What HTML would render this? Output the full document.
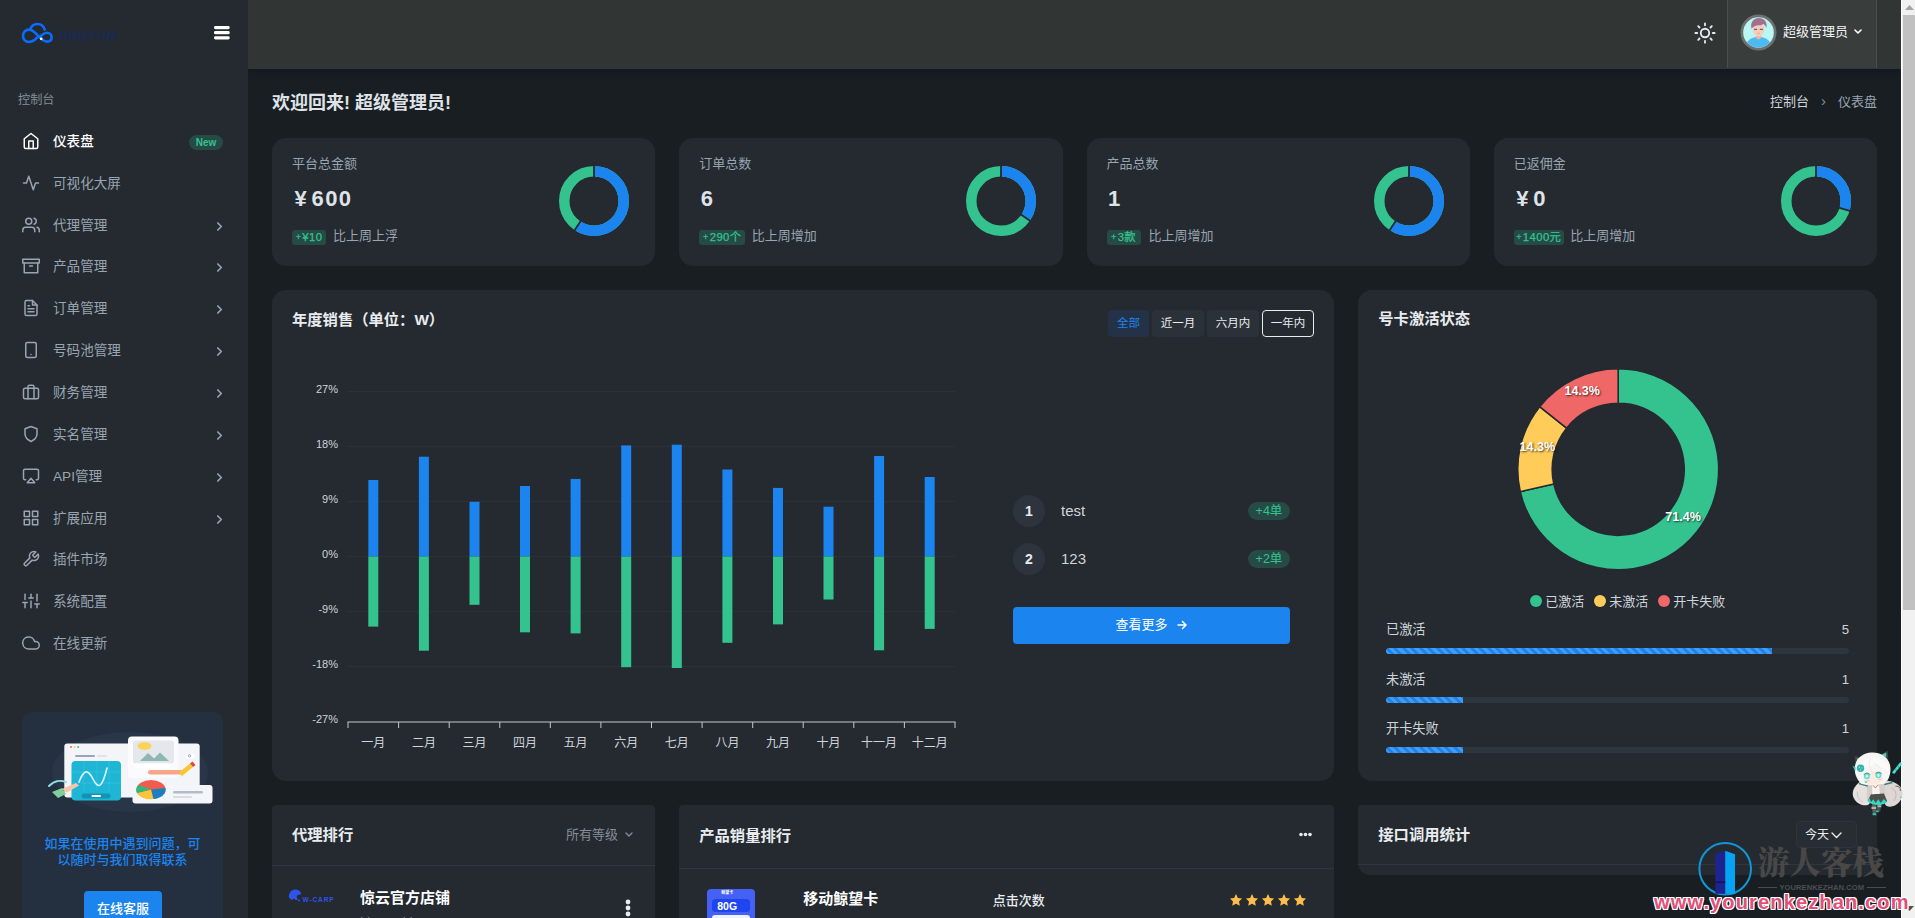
<!DOCTYPE html>
<html lang="zh-CN">
<head>
<meta charset="utf-8">
<title>仪表盘</title>
<style>
*{box-sizing:border-box;margin:0;padding:0}
html,body{width:1915px;height:918px;overflow:hidden;background:#191e22;}
body{font-family:"Liberation Sans","Noto Sans CJK SC",sans-serif;font-size:13.6px;color:#ced4da;position:relative;}
svg{display:block}
.abs{position:absolute}
/* sidebar */
#sidebar{position:absolute;left:0;top:0;width:248px;height:918px;background:#242a30;z-index:5}
#topbar{position:absolute;left:248px;top:0;width:1653px;height:69px;background:#313533;box-shadow:0 3px 6px rgba(10,20,35,.55);z-index:4}
#scroll{position:absolute;left:1901px;top:0;width:14px;height:918px;background:#f1f1f1;border-left:1px solid #fff;z-index:20}
#scroll .thumb{position:absolute;left:1px;top:15px;width:12px;height:594.5px;background:#c1c1c1}
.logo-txt{position:absolute;left:57px;top:28px;font-size:12px;font-weight:bold;letter-spacing:.85px;color:#1b2b50;line-height:16px;-webkit-text-stroke:.4px #1b2b50}
.menu-title{position:absolute;left:18px;top:91px;font-size:12.2px;color:#858d98;line-height:18px}
.mi{position:absolute;left:0;width:248px;height:42px;color:#99a4b1;font-size:13.6px}
.mi svg.ic{position:absolute;left:22px;top:12px;width:18px;height:18px;fill:none;stroke:currentColor;stroke-width:2;stroke-linecap:round;stroke-linejoin:round}
.mi span.t{position:absolute;left:53px;top:11px;line-height:22px;white-space:nowrap}
.mi svg.ch{position:absolute;left:214.7px;top:17px;width:9px;height:11px;fill:none;stroke:currentColor;stroke-width:1.7;stroke-linecap:round;stroke-linejoin:round}
.mi.active{color:#fff;font-weight:500}
.badge-new{position:absolute;left:189px;top:15px;width:34px;height:15px;border-radius:8px;background:#264a45;color:#34c38f;font-size:10px;font-weight:bold;line-height:15px;text-align:center}
.help{position:absolute;left:22px;top:712px;width:201px;height:230px;border-radius:10px;background:#243040}
.help p{position:absolute;left:0;top:124px;width:201px;text-align:center;color:#1c84ee;font-size:13px;line-height:16px;font-weight:500}
.help .btn{position:absolute;left:62px;top:179px;width:78px;height:36px;border-radius:4px;background:#1c84ee;color:#fff;font-size:13px;text-align:center;line-height:36px;font-weight:500}
/* main */
.page-title{position:absolute;left:272px;top:92px;font-size:18px;font-weight:bold;color:#dfe3e8;line-height:22px;white-space:nowrap}
.crumb{position:absolute;left:1600px;width:277px;text-align:right;top:92px;font-size:13px;line-height:20px;color:#ced4da;white-space:nowrap}
.crumb .sep{display:inline-block;width:29px;text-align:center;color:#858d98;font-size:15px;line-height:20px;vertical-align:top;position:relative;top:-1px}
.crumb .cur{color:#99a4b1}
.card{position:absolute;background:#242a30;border-radius:14px}
.stat .lb{position:absolute;left:20px;top:17px;font-size:13px;line-height:18px;color:#99a4b1}
.stat .val{position:absolute;left:21.5px;top:47px;font-size:22px;line-height:28px;font-weight:bold;color:#dfe3e8;white-space:nowrap;letter-spacing:1.4px}
.stat .val .y{display:inline-block;width:17px;margin-left:1px;letter-spacing:0}
.stat .bd{position:absolute;left:20px;top:92px;height:15px;border-radius:3px;background:#264a45;color:#34c38f;font-size:11.3px;line-height:14px;letter-spacing:.4px;-webkit-text-stroke:.25px #34c38f;white-space:nowrap;text-align:center}
.stat .tx{position:absolute;top:88px;font-size:13px;line-height:20px;color:#99a4b1;white-space:nowrap}
.stat svg{position:absolute;left:286px;top:27px}
.ctitle{position:absolute;left:20px;font-size:15.3px;font-weight:bold;color:#e9ecef;line-height:22px;white-space:nowrap}
.fbtn{position:absolute;top:20px;height:27px;border-radius:4px;background:#2b3139;color:#e9ecef;font-size:11.5px;line-height:27px;text-align:center}
.rk .n{position:absolute;left:0;top:0;width:32px;height:32px;border-radius:50%;background:#2e343d;color:#e9ecef;font-weight:bold;font-size:14px;line-height:32px;text-align:center}
.rk .nm{position:absolute;left:48px;top:5px;font-size:15px;line-height:22px;color:#ced4da}
.rk .pl{position:absolute;right:0;top:7px;width:42px;height:18px;border-radius:9px;background:#264a45;color:#34c38f;font-size:12.5px;line-height:18px;text-align:center}
.pg .l{position:absolute;left:0;top:0;font-size:13.2px;line-height:20px;color:#ced4da}
.pg .r{position:absolute;right:0;top:0;font-size:13.2px;line-height:20px;color:#ced4da}
.pg .bar{position:absolute;left:0;top:28px;width:463px;height:6px;border-radius:3px;background:#2f353d;overflow:hidden}
.pg .bar i{display:block;height:6px;border-radius:0;background:#1c84ee repeating-linear-gradient(45deg,rgba(255,255,255,.18) 0 3px,transparent 3px 6px)}
.wm{position:absolute;left:1654px;top:890px;font-size:20px;font-weight:bold;color:#e2507a;letter-spacing:1.15px;line-height:24px;white-space:nowrap;z-index:30;text-shadow:-1px -1px 0 #fff,1px -1px 0 #fff,-1px 1px 0 #fff,1px 1px 0 #fff,0 1px 0 #fff,0 -1px 0 #fff,1px 0 0 #fff,-1px 0 0 #fff}

#main{position:absolute;left:0;top:0;width:1915px;height:918px;z-index:21}

</style>
</head>
<body>
<div id="topbar"></div>
<div id="sidebar">
<svg class="abs" style="left:20px;top:21px" width="36" height="24" viewBox="0 0 36 24"><g fill="none" stroke="#0a6cff" stroke-width="2.6" stroke-linecap="round"><path d="M17.5 16.2C14.5 19.6 12 21 9 21C5.2 21 3 18 3 14.8C3 11.4 5.6 8.6 9 8.6C12.6 8.6 15 11.6 18 14.6C20.6 17.2 23 20.6 27 20.6C30 20.6 31.6 18.6 31.6 16.2C31.6 13.6 29.6 11.8 27 11.8C24.6 11.8 22.6 13.2 20.8 15"/><path d="M10.4 8.2C11.4 5 14.2 3 17.4 3C21 3 23.8 5.2 24.8 8.6"/></g><circle cx="21.2" cy="17.8" r="1.4" fill="#fff"/></svg>
<div class="logo-txt">JINGYUN</div>
<svg class="abs" style="left:214.3px;top:26.3px" width="15.7" height="13.5" viewBox="0 0 15.7 13.5"><g fill="#fff"><rect x="0" y="0" width="15.7" height="3.2" rx="1.4"/><rect x="0" y="5.1" width="15.7" height="3.2" rx="1.4"/><rect x="0" y="10.2" width="15.7" height="3.2" rx="1.4"/></g></svg>
<div class="menu-title">控制台</div>
<div class="mi active" style="top:120px"><svg class="ic" viewBox="0 0 24 24"><path d="M3 9l9-7 9 7v11a2 2 0 0 1-2 2H5a2 2 0 0 1-2-2z"/><polyline points="9 22 9 12 15 12 15 22"/></svg><span class="t">仪表盘</span><span class="badge-new">New</span></div>
<div class="mi" style="top:162px"><svg class="ic" viewBox="0 0 24 24"><polyline points="22 12 18 12 15 21 9 3 6 12 2 12"/></svg><span class="t">可视化大屏</span></div>
<div class="mi" style="top:204px"><svg class="ic" viewBox="0 0 24 24"><path d="M17 21v-2a4 4 0 0 0-4-4H5a4 4 0 0 0-4 4v2"/><circle cx="9" cy="7" r="4"/><path d="M23 21v-2a4 4 0 0 0-3-3.87"/><path d="M16 3.13a4 4 0 0 1 0 7.75"/></svg><span class="t">代理管理</span><svg class="ch" viewBox="0 0 9 11"><polyline points="2.8,2 6.3,5.5 2.8,9"/></svg></div>
<div class="mi" style="top:245px"><svg class="ic" viewBox="0 0 24 24"><polyline points="21 8 21 21 3 21 3 8"/><rect x="1" y="3" width="22" height="5"/><line x1="10" y1="12" x2="14" y2="12"/></svg><span class="t">产品管理</span><svg class="ch" viewBox="0 0 9 11"><polyline points="2.8,2 6.3,5.5 2.8,9"/></svg></div>
<div class="mi" style="top:287px"><svg class="ic" viewBox="0 0 24 24"><path d="M14 2H6a2 2 0 0 0-2 2v16a2 2 0 0 0 2 2h12a2 2 0 0 0 2-2V8z"/><polyline points="14 2 14 8 20 8"/><line x1="16" y1="13" x2="8" y2="13"/><line x1="16" y1="17" x2="8" y2="17"/><polyline points="10 9 9 9 8 9"/></svg><span class="t">订单管理</span><svg class="ch" viewBox="0 0 9 11"><polyline points="2.8,2 6.3,5.5 2.8,9"/></svg></div>
<div class="mi" style="top:329px"><svg class="ic" viewBox="0 0 24 24"><rect x="5" y="2" width="14" height="20" rx="2" ry="2"/><line x1="12" y1="18" x2="12.01" y2="18"/></svg><span class="t">号码池管理</span><svg class="ch" viewBox="0 0 9 11"><polyline points="2.8,2 6.3,5.5 2.8,9"/></svg></div>
<div class="mi" style="top:371px"><svg class="ic" viewBox="0 0 24 24"><rect x="2" y="7" width="20" height="14" rx="2" ry="2"/><path d="M16 21V5a2 2 0 0 0-2-2h-4a2 2 0 0 0-2 2v16"/></svg><span class="t">财务管理</span><svg class="ch" viewBox="0 0 9 11"><polyline points="2.8,2 6.3,5.5 2.8,9"/></svg></div>
<div class="mi" style="top:413px"><svg class="ic" viewBox="0 0 24 24"><path d="M12 22s8-4 8-10V5l-8-3-8 3v7c0 6 8 10 8 10z"/></svg><span class="t">实名管理</span><svg class="ch" viewBox="0 0 9 11"><polyline points="2.8,2 6.3,5.5 2.8,9"/></svg></div>
<div class="mi" style="top:455px"><svg class="ic" viewBox="0 0 24 24"><path d="M5 17H4a2 2 0 0 1-2-2V5a2 2 0 0 1 2-2h16a2 2 0 0 1 2 2v10a2 2 0 0 1-2 2h-1"/><polygon points="12 15 17 21 7 21 12 15"/></svg><span class="t">API管理</span><svg class="ch" viewBox="0 0 9 11"><polyline points="2.8,2 6.3,5.5 2.8,9"/></svg></div>
<div class="mi" style="top:497px"><svg class="ic" viewBox="0 0 24 24"><rect x="3" y="3" width="7" height="7"/><rect x="14" y="3" width="7" height="7"/><rect x="14" y="14" width="7" height="7"/><rect x="3" y="14" width="7" height="7"/></svg><span class="t">扩展应用</span><svg class="ch" viewBox="0 0 9 11"><polyline points="2.8,2 6.3,5.5 2.8,9"/></svg></div>
<div class="mi" style="top:538px"><svg class="ic" viewBox="0 0 24 24"><path d="M14.7 6.3a1 1 0 0 0 0 1.4l1.6 1.6a1 1 0 0 0 1.4 0l3.77-3.77a6 6 0 0 1-7.94 7.94l-6.91 6.91a2.12 2.12 0 0 1-3-3l6.91-6.91a6 6 0 0 1 7.94-7.94l-3.76 3.76z"/></svg><span class="t">插件市场</span></div>
<div class="mi" style="top:580px"><svg class="ic" viewBox="0 0 24 24"><line x1="4" y1="21" x2="4" y2="14"/><line x1="4" y1="10" x2="4" y2="3"/><line x1="12" y1="21" x2="12" y2="12"/><line x1="12" y1="8" x2="12" y2="3"/><line x1="20" y1="21" x2="20" y2="16"/><line x1="20" y1="12" x2="20" y2="3"/><line x1="1" y1="14" x2="7" y2="14"/><line x1="9" y1="8" x2="15" y2="8"/><line x1="17" y1="16" x2="23" y2="16"/></svg><span class="t">系统配置</span></div>
<div class="mi" style="top:622px"><svg class="ic" viewBox="0 0 24 24"><path d="M18 10h-1.26A8 8 0 1 0 9 20h9a5 5 0 0 0 0-10z"/></svg><span class="t">在线更新</span></div>
<div class="help">
<svg class="abs" style="left:0;top:0" width="201" height="120" viewBox="22 712 201 120">
<ellipse cx="130" cy="772" rx="78" ry="40" fill="#283647"/>
<rect x="64.3" y="743.5" width="135.4" height="54" rx="3" fill="#f3f5f8"/>
<circle cx="71" cy="747" r="1" fill="#ef6767"/><circle cx="74.6" cy="747" r="1" fill="#ffcc5a"/><circle cx="78.2" cy="747" r="1" fill="#34c38f"/>
<rect x="75" y="755" width="20" height="2" rx="1" fill="#9aa4b2"/><rect x="97" y="755" width="10" height="2" rx="1" fill="#dfe3ea"/>
<rect x="128" y="736.5" width="50.5" height="41.5" rx="4" fill="#fbfbfd"/>
<rect x="133" y="740.5" width="41" height="23" rx="3" fill="#e4e7ec"/>
<ellipse cx="144.5" cy="746" rx="7" ry="4" fill="#fbd35c"/>
<path d="M140 761l8-8 6 5.5 6-6 9 8.5z" fill="#8fb7b2"/>
<rect x="135" y="763.5" width="35" height="4.5" rx="2.2" fill="#fff"/>
<ellipse cx="190" cy="756" rx="5" ry="2.5" fill="#fff"/><circle cx="189.5" cy="755.8" r="1.2" fill="none" stroke="#6a7380" stroke-width=".6"/>
<rect x="148" y="770" width="35" height="4.5" rx="2.2" fill="#f7a58b"/>
<path d="M179 772.5l11-9 3 3.5-11 9z" fill="#f9c531"/><path d="M190 763.5l2.5-2 3 3.5-2.5 2z" fill="#e2473f"/>
<rect x="71.5" y="761" width="49.5" height="39.6" rx="4" fill="#1fb6d6"/>
<path d="M71.5 772h49.5M71.5 783h49.5M84 761v30M97 761v30M109 761v30" stroke="#3cc4e0" stroke-width=".6" fill="none"/>
<path d="M79 782c5-13 9-13 14-3s9 10 14-11" fill="none" stroke="#d9f7ff" stroke-width="1.6" stroke-linecap="round"/>
<rect x="81.5" y="793.5" width="29" height="5" rx="2.5" fill="#1293b5"/>
<rect x="91.5" y="795" width="9.5" height="2" rx="1" fill="#fff"/>
<rect x="132.5" y="785" width="80" height="18.5" rx="3" fill="#f5f6f9"/>
<ellipse cx="151" cy="789.5" rx="14.5" ry="9.5" fill="#f15c4f"/>
<path d="M151 789.5l14.4-1.5a14.5 9.5 0 0 1-12 11z" fill="#1c7fc0"/>
<path d="M151 789.5l2.4 9.5a14.5 9.5 0 0 1-16.5-6z" fill="#fbc43a"/>
<path d="M151 789.5l-14.1 3.5a14.5 9.5 0 0 1 1.5-8z" fill="#2fb87d"/>
<rect x="173" y="791" width="30" height="2.4" rx="1.2" fill="#b5bcc8"/><rect x="173" y="796" width="19" height="2" rx="1" fill="#d9dce3"/>
<path d="M49 786c6-6 11-6 17-4" fill="none" stroke="#8fe1e6" stroke-width="2" stroke-linecap="round"/>
<path d="M52 792l10-4 4 6-8 4z" fill="#7fcf9b"/>
<path d="M62 789l14-6 3 2.5-12 7z" fill="#f7c6a8"/>
</svg>
<p>如果在使用中遇到问题，可<br>以随时与我们取得联系</p>
<div class="btn">在线客服</div>
</div>
</div>
<div id="main">
<svg class="abs" style="left:1694px;top:22px;z-index:6" width="22" height="22" viewBox="0 0 24 24" fill="none" stroke="#e9ecef" stroke-width="2" stroke-linecap="round" stroke-linejoin="round"><circle cx="12" cy="12" r="4.6"/><line x1="12" y1="1.5" x2="12" y2="3.5"/><line x1="12" y1="20.5" x2="12" y2="22.5"/><line x1="4.6" y1="4.6" x2="6" y2="6"/><line x1="18" y1="18" x2="19.4" y2="19.4"/><line x1="1.5" y1="12" x2="3.5" y2="12"/><line x1="20.5" y1="12" x2="22.5" y2="12"/><line x1="4.6" y1="19.4" x2="6" y2="18"/><line x1="18" y1="6" x2="19.4" y2="4.6"/></svg>
<div class="abs" style="left:1727px;top:0;width:150px;height:68px;background:#393d3b;border-left:1px solid #4a4e4c;border-right:1px solid #4a4e4c;z-index:6">
<svg class="abs" style="left:11.5px;top:14px" width="37" height="37" viewBox="0 0 37 37"><circle cx="18.5" cy="18.5" r="18" fill="#6c706f"/><circle cx="18.5" cy="18.5" r="15.3" fill="#b9f6f4"/><path d="M7 28.5c2.5-4 6-5.5 11.5-5.5s9 1.5 11.5 5.5a15.3 15.3 0 0 1-23 0z" fill="#4fbaf2"/><path d="M16 20.5h5v3.5l-2.5 1.8-2.5-1.8z" fill="#f0b39f"/><path d="M12.8 14c0-3 2.5-5 5.7-5s5.7 2 5.7 5.5c0 4.5-2.5 8-5.7 8s-5.7-3.5-5.7-8.5z" fill="#f6cdbb"/><path d="M11.5 14.5c-1.5-6 2-10.5 7.5-10.5 5 0 8.5 3.5 7.5 10-.8-2-1.8-3.2-3.2-4-1.5 1.2-3.3 1.5-5.3 1.2-2 .3-4.5 1.3-6.5 3.3z" fill="#a0708c"/><path d="M14 15.3h3.2M19.8 15.3h3.2" stroke="#5a3f55" stroke-width="1" fill="none"/><path d="M17.3 19.3h2.4" stroke="#e88f86" stroke-width=".8" fill="none"/></svg>
<span class="abs" style="left:55px;top:21.5px;font-size:13px;line-height:20px;color:#f3f4f5;white-space:nowrap">超级管理员</span>
<svg class="abs" style="left:126px;top:28.5px" width="8" height="6" viewBox="0 0 8 6" fill="none" stroke="#fff" stroke-width="1.6" stroke-linecap="round" stroke-linejoin="round"><polyline points="1,1 4,4 7,1"/></svg>
</div>
<div class="page-title">欢迎回来! 超级管理员!</div>
<div class="crumb">控制台<span class="sep">›</span><span class="cur">仪表盘</span></div>
<div class="card stat" style="left:272px;top:138px;width:383.25px;height:128px"><div class="lb">平台总金额</div><div class="val"><span class="y">¥</span>600</div><div class="bd" style="width:34px"><span style="font-size:9px;position:relative;top:-1.5px;margin-right:1px">+</span>¥10</div><div class="tx" style="left:60.9px">比上周上浮</div><svg width="72" height="72" viewBox="0 0 72 72"><circle cx="36" cy="36" r="29.75" fill="none" stroke="#34c38f" stroke-width="10.5"/><circle cx="36" cy="36" r="29.75" fill="none" stroke="#1c84ee" stroke-width="10.5" stroke-dasharray="110.85 76.08" transform="rotate(-90 36 36)"/><g stroke="#242a30" stroke-width="1.8"><line x1="36" y1="0" x2="36" y2="12.5"/><line x1="23.04" y1="55.6" x2="16.14" y2="66.03"/></g></svg></div>
<div class="card stat" style="left:679.25px;top:138px;width:383.25px;height:128px"><div class="lb">订单总数</div><div class="val">6</div><div class="bd" style="width:46px"><span style="font-size:9px;position:relative;top:-1.5px;margin-right:1px">+</span>290个</div><div class="tx" style="left:72.4px">比上周增加</div><svg width="72" height="72" viewBox="0 0 72 72"><circle cx="36" cy="36" r="29.75" fill="none" stroke="#34c38f" stroke-width="10.5"/><circle cx="36" cy="36" r="29.75" fill="none" stroke="#1c84ee" stroke-width="10.5" stroke-dasharray="64.49 122.44" transform="rotate(-90 36 36)"/><g stroke="#242a30" stroke-width="1.8"><line x1="36" y1="0" x2="36" y2="12.5"/><line x1="55.44" y1="49.21" x2="65.77" y2="56.24"/></g></svg></div>
<div class="card stat" style="left:1086.5px;top:138px;width:383.25px;height:128px"><div class="lb">产品总数</div><div class="val">1</div><div class="bd" style="width:34px"><span style="font-size:9px;position:relative;top:-1.5px;margin-right:1px">+</span>3款</div><div class="tx" style="left:62px">比上周增加</div><svg width="72" height="72" viewBox="0 0 72 72"><circle cx="36" cy="36" r="29.75" fill="none" stroke="#34c38f" stroke-width="10.5"/><circle cx="36" cy="36" r="29.75" fill="none" stroke="#1c84ee" stroke-width="10.5" stroke-dasharray="110.85 76.08" transform="rotate(-90 36 36)"/><g stroke="#242a30" stroke-width="1.8"><line x1="36" y1="0" x2="36" y2="12.5"/><line x1="23.04" y1="55.6" x2="16.14" y2="66.03"/></g></svg></div>
<div class="card stat" style="left:1493.75px;top:138px;width:383.25px;height:128px"><div class="lb">已返佣金</div><div class="val"><span class="y">¥</span>0</div><div class="bd" style="width:50px"><span style="font-size:9px;position:relative;top:-1.5px;margin-right:1px">+</span>1400元</div><div class="tx" style="left:76.4px">比上周增加</div><svg width="72" height="72" viewBox="0 0 72 72"><circle cx="36" cy="36" r="29.75" fill="none" stroke="#34c38f" stroke-width="10.5"/><circle cx="36" cy="36" r="29.75" fill="none" stroke="#1c84ee" stroke-width="10.5" stroke-dasharray="55.14 131.78" transform="rotate(-90 36 36)"/><g stroke="#242a30" stroke-width="1.8"><line x1="36" y1="0" x2="36" y2="12.5"/><line x1="58.57" y1="42.56" x2="70.57" y2="46.04"/></g></svg></div>
<div class="card" style="left:272px;top:290px;width:1062px;height:491px">
<div class="ctitle" style="top:19px">年度销售（单位：W）</div>
<div class="fbtn" style="left:836px;width:41px;background:#233246;color:#1c84ee">全部</div>
<div class="fbtn" style="left:880px;width:52px">近一月</div>
<div class="fbtn" style="left:935px;width:52px">六月内</div>
<div class="fbtn" style="left:990px;width:52px;background:#242a30;border:1.5px solid #e9ecef;line-height:24.5px">一年内</div>
<svg class="abs" style="left:0;top:80px" width="720" height="400" viewBox="272 370 720 400" font-family="Liberation Sans, Noto Sans CJK SC, sans-serif"><line x1="348" y1="391.5" x2="955" y2="391.5" stroke="#2c3138" stroke-width="1"/><text x="338" y="393" font-size="11" fill="#ced4da" text-anchor="end">27%</text><line x1="348" y1="446.5" x2="955" y2="446.5" stroke="#2c3138" stroke-width="1"/><text x="338" y="448" font-size="11" fill="#ced4da" text-anchor="end">18%</text><line x1="348" y1="501.5" x2="955" y2="501.5" stroke="#2c3138" stroke-width="1"/><text x="338" y="503" font-size="11" fill="#ced4da" text-anchor="end">9%</text><line x1="348" y1="556.5" x2="955" y2="556.5" stroke="#2c3138" stroke-width="1"/><text x="338" y="558" font-size="11" fill="#ced4da" text-anchor="end">0%</text><line x1="348" y1="611.5" x2="955" y2="611.5" stroke="#2c3138" stroke-width="1"/><text x="338" y="613" font-size="11" fill="#ced4da" text-anchor="end">-9%</text><line x1="348" y1="666.5" x2="955" y2="666.5" stroke="#2c3138" stroke-width="1"/><text x="338" y="668" font-size="11" fill="#ced4da" text-anchor="end">-18%</text><text x="338" y="723" font-size="11" fill="#ced4da" text-anchor="end">-27%</text><rect x="368.3" y="480" width="10" height="76.5" fill="#1c84ee"/><rect x="368.3" y="556.5" width="10" height="70.1" fill="#34c38f"/><text x="373.3" y="747" font-size="12" fill="#ced4da" text-anchor="middle">一月</text><rect x="418.9" y="456.7" width="10" height="99.8" fill="#1c84ee"/><rect x="418.9" y="556.5" width="10" height="94.2" fill="#34c38f"/><text x="423.9" y="747" font-size="12" fill="#ced4da" text-anchor="middle">二月</text><rect x="469.5" y="501.8" width="10" height="54.7" fill="#1c84ee"/><rect x="469.5" y="556.5" width="10" height="48.3" fill="#34c38f"/><text x="474.5" y="747" font-size="12" fill="#ced4da" text-anchor="middle">三月</text><rect x="520" y="486" width="10" height="70.5" fill="#1c84ee"/><rect x="520" y="556.5" width="10" height="75.8" fill="#34c38f"/><text x="525" y="747" font-size="12" fill="#ced4da" text-anchor="middle">四月</text><rect x="570.6" y="478.9" width="10" height="77.6" fill="#1c84ee"/><rect x="570.6" y="556.5" width="10" height="76.9" fill="#34c38f"/><text x="575.6" y="747" font-size="12" fill="#ced4da" text-anchor="middle">五月</text><rect x="621.2" y="445.4" width="10" height="111.1" fill="#1c84ee"/><rect x="621.2" y="556.5" width="10" height="110.7" fill="#34c38f"/><text x="626.2" y="747" font-size="12" fill="#ced4da" text-anchor="middle">六月</text><rect x="671.8" y="444.7" width="10" height="111.8" fill="#1c84ee"/><rect x="671.8" y="556.5" width="10" height="111.5" fill="#34c38f"/><text x="676.8" y="747" font-size="12" fill="#ced4da" text-anchor="middle">七月</text><rect x="722.4" y="469.5" width="10" height="87" fill="#1c84ee"/><rect x="722.4" y="556.5" width="10" height="86.3" fill="#34c38f"/><text x="727.4" y="747" font-size="12" fill="#ced4da" text-anchor="middle">八月</text><rect x="773" y="487.9" width="10" height="68.6" fill="#1c84ee"/><rect x="773" y="556.5" width="10" height="67.9" fill="#34c38f"/><text x="778" y="747" font-size="12" fill="#ced4da" text-anchor="middle">九月</text><rect x="823.5" y="506.7" width="10" height="49.8" fill="#1c84ee"/><rect x="823.5" y="556.5" width="10" height="43" fill="#34c38f"/><text x="828.5" y="747" font-size="12" fill="#ced4da" text-anchor="middle">十月</text><rect x="874.1" y="456" width="10" height="100.5" fill="#1c84ee"/><rect x="874.1" y="556.5" width="10" height="93.8" fill="#34c38f"/><text x="879.1" y="747" font-size="12" fill="#ced4da" text-anchor="middle">十一月</text><rect x="924.7" y="477" width="10" height="79.5" fill="#1c84ee"/><rect x="924.7" y="556.5" width="10" height="72.4" fill="#34c38f"/><text x="929.7" y="747" font-size="12" fill="#ced4da" text-anchor="middle">十二月</text><line x1="347.5" y1="722" x2="955.5" y2="722" stroke="#c4c8cd" stroke-width="1"/><line x1="348" y1="722" x2="348" y2="728" stroke="#c4c8cd" stroke-width="1"/><line x1="398.6" y1="722" x2="398.6" y2="728" stroke="#c4c8cd" stroke-width="1"/><line x1="449.2" y1="722" x2="449.2" y2="728" stroke="#c4c8cd" stroke-width="1"/><line x1="499.8" y1="722" x2="499.8" y2="728" stroke="#c4c8cd" stroke-width="1"/><line x1="550.3" y1="722" x2="550.3" y2="728" stroke="#c4c8cd" stroke-width="1"/><line x1="600.9" y1="722" x2="600.9" y2="728" stroke="#c4c8cd" stroke-width="1"/><line x1="651.5" y1="722" x2="651.5" y2="728" stroke="#c4c8cd" stroke-width="1"/><line x1="702.1" y1="722" x2="702.1" y2="728" stroke="#c4c8cd" stroke-width="1"/><line x1="752.7" y1="722" x2="752.7" y2="728" stroke="#c4c8cd" stroke-width="1"/><line x1="803.2" y1="722" x2="803.2" y2="728" stroke="#c4c8cd" stroke-width="1"/><line x1="853.8" y1="722" x2="853.8" y2="728" stroke="#c4c8cd" stroke-width="1"/><line x1="904.4" y1="722" x2="904.4" y2="728" stroke="#c4c8cd" stroke-width="1"/><line x1="955" y1="722" x2="955" y2="728" stroke="#c4c8cd" stroke-width="1"/></svg>
<div class="abs rk" style="left:741px;top:205px;width:277px;height:32px"><div class="n">1</div><div class="nm">test</div><div class="pl">+4单</div></div>
<div class="abs rk" style="left:741px;top:253px;width:277px;height:32px"><div class="n">2</div><div class="nm">123</div><div class="pl">+2单</div></div>
<div class="abs" style="left:741px;top:317px;width:277px;height:37px;border-radius:4px;background:#1c84ee;color:#fff;font-size:13px;line-height:36px;text-align:center;padding-right:20px">查看更多<svg class="abs" style="left:163.5px;top:13px" width="10" height="10" viewBox="0 0 10 10" fill="none" stroke="#fff" stroke-width="1.5" stroke-linecap="round" stroke-linejoin="round"><path d="M1 5h8M5.5 1.5L9 5 5.5 8.5"/></svg></div>
</div>
<div class="card" style="left:1358.3px;top:290px;width:518.7px;height:491px">
<div class="ctitle" style="top:18px">号卡激活状态</div>
<svg class="abs" style="left:0;top:0" width="518" height="330" viewBox="0 0 518 330" font-family="Liberation Sans, sans-serif"><path d="M260.2 78.8A100.5 100.5 0 1 1 162.22 201.66L195.85 193.99A66 66 0 1 0 260.2 113.3Z" fill="#34c38f" stroke="#242a30" stroke-width="1.6"/><path d="M162.22 201.66A100.5 100.5 0 0 1 181.63 116.64L208.6 138.15A66 66 0 0 0 195.85 193.99Z" fill="#ffcc5a" stroke="#242a30" stroke-width="1.6"/><path d="M181.63 116.64A100.5 100.5 0 0 1 260.2 78.8L260.2 113.3A66 66 0 0 0 208.6 138.15Z" fill="#ef6767" stroke="#242a30" stroke-width="1.6"/><text x="325.1" y="231" font-size="12.5" font-weight="bold" fill="#fff" text-anchor="middle" style="text-shadow:1px 1px 2px rgba(0,0,0,.7)">71.4%</text><text x="179.3" y="160.8" font-size="12.5" font-weight="bold" fill="#fff" text-anchor="middle" style="text-shadow:1px 1px 2px rgba(0,0,0,.7)">14.3%</text><text x="224.2" y="104.5" font-size="12.5" font-weight="bold" fill="#fff" text-anchor="middle" style="text-shadow:1px 1px 2px rgba(0,0,0,.7)">14.3%</text><circle cx="178" cy="311" r="6" fill="#34c38f"/><circle cx="242" cy="311" r="6" fill="#ffcc5a"/><circle cx="306" cy="311" r="6" fill="#ef6767"/></svg>
<span class="abs" style="left:187px;top:302px;font-size:13px;line-height:20px;color:#ced4da;white-space:nowrap">已激活</span>
<span class="abs" style="left:251px;top:302px;font-size:13px;line-height:20px;color:#ced4da;white-space:nowrap">未激活</span>
<span class="abs" style="left:315px;top:302px;font-size:13px;line-height:20px;color:#ced4da;white-space:nowrap">开卡失败</span>
<div class="abs pg" style="left:27.7px;top:330px;width:463px;height:40px"><span class="l">已激活</span><span class="r">5</span><div class="bar" style="top:28px"><i style="width:386px"></i></div></div>
<div class="abs pg" style="left:27.7px;top:380px;width:463px;height:40px"><span class="l">未激活</span><span class="r">1</span><div class="bar" style="top:27px"><i style="width:77px"></i></div></div>
<div class="abs pg" style="left:27.7px;top:429px;width:463px;height:40px"><span class="l">开卡失败</span><span class="r">1</span><div class="bar" style="top:28px"><i style="width:77px"></i></div></div>
</div>
<div class="card" style="left:272px;top:805px;width:383.25px;height:200px;border-radius:4px">
<div class="ctitle" style="top:19px">代理排行</div>
<span class="abs" style="left:294px;top:20px;font-size:13px;line-height:20px;color:#858d98;white-space:nowrap">所有等级</span>
<svg class="abs" style="left:353px;top:27px" width="8" height="6" viewBox="0 0 8 6" fill="none" stroke="#858d98" stroke-width="1.4" stroke-linecap="round" stroke-linejoin="round"><polyline points="1,1 4,4 7,1"/></svg>
<div class="abs" style="left:0;top:59.5px;width:100%;height:1px;background:#30363e"></div>
<svg class="abs" style="left:16px;top:84px" width="16" height="14" viewBox="0 0 16 14"><path d="M1 8.5a6.5 6.5 0 0 1 12.5-3.5l-1.5 .5c-2 0-3 1-3.5 2.5l1.5 3h-2.5l-1.5-1.5-2 1.5a6.5 6.5 0 0 1-3-2.5z" fill="#2f54eb"/><circle cx="11" cy="11.5" r="1" fill="#2f54eb"/></svg>
<span class="abs" style="left:30.5px;top:90.5px;font-size:6.5px;line-height:8px;font-weight:bold;letter-spacing:.9px;color:#2f54eb;white-space:nowrap">W-CARP</span>
<span class="abs" style="left:88px;top:82px;font-size:15px;line-height:22px;font-weight:bold;color:#fff;white-space:nowrap">惊云官方店铺</span>
<span class="abs" style="left:88px;top:107.5px;font-size:13px;line-height:18px;color:#858d98;white-space:nowrap">Lingmubing</span>
<svg class="abs" style="left:352.5px;top:93.5px" width="6" height="18" viewBox="0 0 6 18" fill="#e9ecef"><circle cx="3" cy="3" r="2.4"/><circle cx="3" cy="9" r="2.4"/><circle cx="3" cy="15" r="2.4"/></svg>
</div>
<div class="card" style="left:679.25px;top:805px;width:654.75px;height:200px;border-radius:4px">
<div class="ctitle" style="top:20px">产品销量排行</div>
<svg class="abs" style="left:619.5px;top:26.7px" width="13" height="5" viewBox="0 0 13 5" fill="#e9ecef"><circle cx="2" cy="2.5" r="1.8"/><circle cx="6.5" cy="2.5" r="1.8"/><circle cx="11" cy="2.5" r="1.8"/></svg>
<div class="abs" style="left:0;top:63px;width:100%;height:1px;background:#30363e"></div>
<div class="abs" style="left:28px;top:83.7px;width:48px;height:60px;border-radius:4px;background:#4460f5;overflow:hidden"><span class="abs" style="left:14px;top:1px;font-size:4px;line-height:5px;color:#fff;font-weight:bold;white-space:nowrap">鲸望卡</span><div class="abs" style="left:4.7px;top:10.8px;width:38px;height:13px;border-radius:3.5px;background:#1f46ee"></div><span class="abs" style="left:10px;top:10px;font-size:10.5px;line-height:15px;font-weight:bold;color:#fff;white-space:nowrap">80G</span><div class="abs" style="left:5px;top:26.5px;width:38px;height:30px;border-radius:3px;background:#eef2ff"></div></div>
<span class="abs" style="left:124px;top:82.5px;font-size:15px;line-height:22px;font-weight:bold;color:#fff;white-space:nowrap">移动鲸望卡</span>
<span class="abs" style="left:313.5px;top:85.5px;font-size:13px;line-height:20px;color:#e9ecef;font-weight:500;white-space:nowrap">点击次数</span>
<svg class="abs" style="left:550.5px;top:88.7px" width="80" height="13" viewBox="0 0 80 13" fill="#fbbd4a"><path transform="translate(0,0)" d="M6 0l1.9 3.9 4.2.6-3.1 3 .8 4.3L6 9.7l-3.8 2.1.8-4.3-3.1-3 4.2-.6z"/><path transform="translate(16,0)" d="M6 0l1.9 3.9 4.2.6-3.1 3 .8 4.3L6 9.7l-3.8 2.1.8-4.3-3.1-3 4.2-.6z"/><path transform="translate(32,0)" d="M6 0l1.9 3.9 4.2.6-3.1 3 .8 4.3L6 9.7l-3.8 2.1.8-4.3-3.1-3 4.2-.6z"/><path transform="translate(48,0)" d="M6 0l1.9 3.9 4.2.6-3.1 3 .8 4.3L6 9.7l-3.8 2.1.8-4.3-3.1-3 4.2-.6z"/><path transform="translate(64,0)" d="M6 0l1.9 3.9 4.2.6-3.1 3 .8 4.3L6 9.7l-3.8 2.1.8-4.3-3.1-3 4.2-.6z"/></svg>
</div>
<div class="card" style="left:1358.3px;top:805px;width:518.7px;height:70px;border-radius:4px 4px 12px 12px">
<div class="ctitle" style="top:19px">接口调用统计</div>
<div class="abs" style="left:438px;top:16px;width:61px;height:27px;border-radius:4px;background:#282d34;border:1px solid #2e343b"></div>
<span class="abs" style="left:446.7px;top:19.5px;font-size:12px;line-height:20px;color:#e9ecef;white-space:nowrap">今天</span>
<svg class="abs" style="left:472.5px;top:26.5px" width="11" height="7" viewBox="0 0 11 7" fill="none" stroke="#e9ecef" stroke-width="1.4" stroke-linecap="round" stroke-linejoin="round"><polyline points="1,1 5.5,5.5 10,1"/></svg>
<div class="abs" style="left:0;top:59px;width:100%;height:1px;background:#30363e"></div>
</div>
<svg class="abs" style="left:1840px;top:740px;z-index:25" width="75" height="85" viewBox="0 0 810 918">
<path d="M562 352L652 238l18 24-84 106z" fill="#40e0d0"/><path d="M600 318l14 18M628 284l14 18" stroke="#1d6f68" stroke-width="8"/>
<path d="M215 450C150 500 118 565 150 630c25 52 85 88 150 72 30-10 35-50 25-100l-25-130z" fill="#e6e1df"/>
<path d="M190 560c-10 40 10 90 60 110" fill="none" stroke="#c9c1be" stroke-width="10"/>
<path d="M510 440c90 10 170 55 165 140-4 72-55 132-135 142-42 2-62-28-62-70l-10-180z" fill="#ddd6d4"/>
<path d="M560 520c50 20 60 90 20 140" fill="none" stroke="#bfb6b3" stroke-width="10"/>
<path d="M600 500c30-5 60 15 50 50" fill="none" stroke="#3a3f3d" stroke-width="9"/>
<path d="M290 460h200v200h-200z" fill="#d5cecb"/><path d="M345 695l48 0-2 112-38 0z" fill="#5b5e58"/><path d="M398 695l46 0-8 78-36-4z" fill="#4b4e49"/>
<path d="M340 720h50v26h-50zM405 705h42v22h-42z" fill="#aeb6b2"/>
<path d="M353 792h38v20h-38zM392 760l30 6-8 18-26-8z" fill="#2fc3b5"/>
<path d="M335 585l140-8 34 85c-52 42-152 42-208-8z" fill="#4d4f49"/>
<path d="M298 650l20-24 18 44 24-30 24 40 30-40 26 40 32-44 36 36c-52 42-152 42-208-8z" fill="#36d6c4"/>
<path d="M348 488h74l8 92-82 6z" fill="#f8f6f5"/>
<path d="M350 480l32 38 36-38" fill="none" stroke="#e2572b" stroke-width="9"/>
<path d="M205 470l95 28M478 480l88-22" stroke="#3f7f78" stroke-width="16" fill="none"/>
<path d="M158 172l80 16-26 66-46-6z" fill="#4a4039"/><path d="M182 196l38 10-14 30-22-4z" fill="#36d6c4"/><path d="M196 226l20 6-8 16z" fill="#c2532e"/>
<path d="M418 168l98-52 6 100-78 4z" fill="#4a4039"/><path d="M452 158l46-22 2 50z" fill="#36d6c4"/><path d="M430 190l30-4 4 22z" fill="#c2532e"/>
<path d="M160 330C150 220 230 140 340 135c110-5 200 60 205 170 3 70-20 130-60 165l-120 22-130-18c-40-30-70-80-75-144z" fill="#f7f6f5"/>
<path d="M250 410c0-45 45-72 105-72s108 25 108 70c0 42-45 72-108 72s-105-28-105-70z" fill="#fdeadf"/>
<path d="M200 330c20-90 90-150 170-140 80 8 140 70 160 150-30-30-60-45-90-40-10-25-30-40-50-30-10-20-40-20-50 10-50 0-100 20-140 50z" fill="#fbfafa"/>
<path d="M330 200c-20 40-20 90 20 140M380 250c20 30 40 50 70 60" stroke="#e3dedc" stroke-width="6" fill="none"/>
<ellipse cx="290" cy="388" rx="32" ry="35" fill="#58e0d2"/><ellipse cx="415" cy="378" rx="32" ry="35" fill="#58e0d2"/>
<path d="M258 376c8-22 52-26 66 0M384 366c8-22 52-26 66 0" stroke="#6b5a4e" stroke-width="7" fill="none"/>
<ellipse cx="290" cy="392" rx="14" ry="17" fill="#c9f7f1"/><ellipse cx="415" cy="382" rx="14" ry="17" fill="#c9f7f1"/>
<ellipse cx="300" cy="440" rx="22" ry="10" fill="#fbcdc6"/><ellipse cx="432" cy="425" rx="22" ry="10" fill="#fbcdc6"/>
<path d="M268 445l24 4-4 16-22-6z" fill="#36d6c4"/>
<circle cx="222" cy="305" r="40" fill="#2db5ab"/><circle cx="210" cy="295" r="7" fill="#9fe9e2"/><circle cx="236" cy="300" r="7" fill="#9fe9e2"/><circle cx="222" cy="322" r="7" fill="#9fe9e2"/>
<path d="M134 276l36 22-4 40z" fill="#36d6c4"/>
<path d="M650 610l18 6-4 14-16-6z" fill="#36d6c4"/>
</svg>
<svg class="abs" style="left:1696px;top:840px;z-index:24" width="200" height="60" viewBox="1696 840 200 60"><circle cx="1725.2" cy="868.8" r="25.8" fill="none" stroke="#1296db" stroke-width="2"/><path d="M1715.3 853.5l9.9-2.7v43h-9.9z" fill="#1e2390"/><path d="M1725.2 850.8l9.8 3.5v39.5h-9.8z" fill="#04a4f2"/><rect x="1715.3" y="881.5" width="10" height="1.5" fill="#10155a"/><line x1="1758" y1="887.5" x2="1777" y2="887.5" stroke="#4a4c4e" stroke-width="1"/><line x1="1867" y1="887.5" x2="1886" y2="887.5" stroke="#4a4c4e" stroke-width="1"/></svg>
<span class="abs" style="left:1758px;top:843.5px;z-index:24;font-family:'Liberation Serif','Noto Serif CJK SC',serif;font-weight:900;font-size:31.5px;line-height:40px;color:#4a4847;white-space:nowrap">游人客栈</span>
<span class="abs" style="left:1779.5px;top:882.5px;z-index:24;font-size:7.5px;line-height:10px;color:#4d4f52;font-weight:bold;letter-spacing:.1px;white-space:nowrap">YOURENKEZHAN.COM</span>
<div class="wm">www.yourenkezhan.com</div>
</div>
<div id="scroll"><div class="thumb"></div><svg class="abs" style="left:3px;top:4.5px" width="9" height="5" viewBox="0 0 9 5"><path d="M0 5l4.5-5 4.5 5z" fill="#a3a3a3"/></svg><svg class="abs" style="left:3px;top:906px" width="9" height="5" viewBox="0 0 9 5"><path d="M0 0l4.5 5 4.5-5z" fill="#505050"/></svg></div>
</body>
</html>
